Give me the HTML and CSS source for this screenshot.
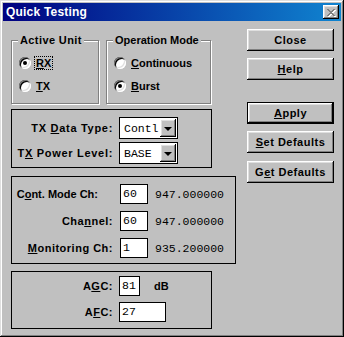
FILE: index.html
```html
<!DOCTYPE html>
<html lang="en">
<head>
  <meta charset="UTF-8">
  <title>Quick Testing</title>
  <link rel="stylesheet" href="styles.css">
</head>
<body>
  <div class="window">
    <div class="titlebar">
      <span class="title">Quick Testing</span>
      <span class="tb-close">
        <svg width="9" height="8" viewBox="0 0 9 8">
          <path fill="#fff" transform="translate(1,1)" d="M0 0h2v1H0zM6 0h2v1H6zM1 1h2v1H1zM5 1h2v1H5zM2 2h4v1H2zM3 3h2v1H3zM2 4h4v1H2zM1 5h2v1H1zM5 5h2v1H5zM0 6h2v1H0zM6 6h2v1H6z"/>
          <path fill="#808080" d="M0 0h2v1H0zM6 0h2v1H6zM1 1h2v1H1zM5 1h2v1H5zM2 2h4v1H2zM3 3h2v1H3zM2 4h4v1H2zM1 5h2v1H1zM5 5h2v1H5zM0 6h2v1H0zM6 6h2v1H6z"/>
        </svg>
      </span>
    </div>
    <div class="content">
      <div class="left">
        <div class="top-groups">
          <div class="group g-unit">
            <div class="group-title">Active Unit</div>
            <div class="radio-row"><span class="radio checked"></span><span class="focus"><u>R</u>X</span></div>
            <div class="radio-row"><span class="radio"></span><span class="rl"><u>T</u>X</span></div>
          </div>
          <div class="group g-mode">
            <div class="group-title">Operation Mode</div>
            <div class="radio-row"><span class="radio"></span><span class="rl"><u>C</u>ontinuous</span></div>
            <div class="radio-row"><span class="radio checked"></span><span class="rl"><u>B</u>urst</span></div>
          </div>
        </div>

        <div class="frame tx">
          <label class="lbl">TX <u>D</u>ata Type:</label>
          <div class="combo"><span class="combo-val">Contl</span><span class="combo-btn"><i class="arrow"></i></span></div>
          <label class="lbl">T<u>X</u> Power Level:</label>
          <div class="combo"><span class="combo-val">BASE</span><span class="combo-btn"><i class="arrow"></i></span></div>
        </div>

        <div class="frame chan">
          <label class="lbl short">C<u>o</u>nt. Mode Ch:</label>
          <span class="field w28">60</span>
          <span class="freq">947.000000</span>
          <label class="lbl">Cha<u>n</u>nel:</label>
          <span class="field w28">60</span>
          <span class="freq">947.000000</span>
          <label class="lbl"><u>M</u>onitoring Ch:</label>
          <span class="field w28">1</span>
          <span class="freq">935.200000</span>
        </div>

        <div class="frame agc">
          <label class="lbl">A<u>G</u>C:</label>
          <div class="agc-val"><span class="field w21">81</span><span class="db">dB</span></div>
          <label class="lbl">A<u>F</u>C:</label>
          <div><span class="field w47">27</span></div>
        </div>
      </div>

      <div class="right">
        <button class="btn">Close</button>
        <button class="btn"><u>H</u>elp</button>
        <button class="btn default spaced"><u>A</u>pply</button>
        <button class="btn"><u>S</u>et Defaults</button>
        <button class="btn last">G<u>e</u>t Defaults</button>
      </div>
    </div>
  </div>
</body>
</html>
```

FILE: styles.css
```css
*{margin:0;padding:0;box-sizing:border-box}
body{width:344px;height:337px;background:#c0c0c0;font-family:'Liberation Sans',Arial,sans-serif;font-size:11px;font-weight:bold;color:#000;overflow:hidden}
u{text-decoration:underline;text-underline-offset:1px}

.window{width:344px;height:337px;padding:3px;background:#c0c0c0;box-shadow:inset -1px -1px #000,inset 1px 1px #dfdfdf,inset -2px -2px #808080,inset 2px 2px #fff}
.titlebar{height:18px;display:flex;align-items:center;justify-content:space-between;padding:0 2px 0 3px;background:linear-gradient(to right,#000080,#1084d0);color:#fff}
.title{font-size:12px;font-weight:bold;letter-spacing:.2px}
.tb-close{width:16px;height:14px;background:#c0c0c0;display:flex;align-items:center;justify-content:center;padding:1px 0 0 1px;box-shadow:inset -1px -1px #000,inset 1px 1px #fff,inset -2px -2px #808080,inset 2px 2px #dfdfdf}
.tb-close svg{display:block}

.content{display:flex;padding-left:8px}
.left{width:225px;flex:none}
.right{width:87px;flex:none;margin-left:11px;padding-top:8px;display:flex;flex-direction:column}

/* group boxes */
.top-groups{display:flex;margin-top:19px}
.group{flex:none;height:64px;border:1px solid #808080;box-shadow:inset 1px 1px #fff,1px 1px #fff}
.g-unit{width:88px;margin-right:7px}
.g-mode{width:105px}
.group-title{display:block;width:fit-content;height:13px;line-height:13px;margin:-7px 0 0 6px;padding:0 2px;background:#c0c0c0}
.g-unit .group-title{letter-spacing:.4px}
.radio-row{display:flex;align-items:center;height:16px;margin:8px 0 0 7px}
.radio-row+.radio-row{margin-top:7px}
.radio{width:12px;height:12px;border-radius:50%;background:#fff;margin-right:4px;flex:none;position:relative;
  box-shadow:inset 1px 1px #808080,inset -1px -1px #fff,inset 2px 2px #000,inset -2px -2px #dfdfdf}
.radio.checked::after{content:"";position:absolute;left:4px;top:4px;width:4px;height:4px;border-radius:50%;background:#000}
.focus{outline:1px dotted #000;outline-offset:0;padding:0 1px}
.rl{padding:0 1px}

/* plain frames */
.frame{width:201px;border:1px solid #000;display:grid;grid-template-columns:101px auto;column-gap:6px;align-items:center;align-content:start}
.frame.tx{height:59px;margin-top:5px;padding-top:7px;row-gap:3px}
.frame.chan{width:225px;height:88px;margin-top:8px;padding-top:7px;row-gap:7px;grid-template-columns:101px 28px auto;column-gap:7px}
.frame.agc{height:58px;margin-top:7px;padding-top:4px;row-gap:6px}
.lbl{text-align:right;white-space:nowrap;letter-spacing:.5px}
.tx .lbl{letter-spacing:.7px}
.lbl.short{margin-right:15px;letter-spacing:0}

.combo{width:59px;height:22px;background:#fff;border:1px solid #000;display:flex;align-items:center;justify-content:space-between;padding:1px}
.combo-val{font:11.5px 'Liberation Mono',monospace;padding-left:3px}
.combo-btn{width:16px;height:18px;background:#c0c0c0;display:flex;align-items:center;justify-content:center;box-shadow:inset -1px -1px #000,inset 1px 1px #fff,inset -2px -2px #808080,inset 2px 2px #dfdfdf}
.arrow{width:0;height:0;border-left:4px solid transparent;border-right:4px solid transparent;border-top:4px solid #000;margin-top:1px}

.field{display:block;height:20px;background:#fff;border:1px solid #000;font:11.5px/18px 'Liberation Mono',monospace;padding-left:2px}
.w28{width:28px}
.w21{width:21px}
.w47{width:47px}
.freq{font:11.5px 'Liberation Mono',monospace}
.agc-val{display:flex;align-items:center}
.db{margin-left:14px}

/* buttons */
.btn{width:87px;height:22px;margin-bottom:7px;background:#c0c0c0;border:none;font:inherit;letter-spacing:.5px;color:#000;
  box-shadow:inset -1px -1px #000,inset 1px 1px #fff,inset -2px -2px #808080,inset 2px 2px #dfdfdf}
.btn.spaced{margin-top:15px}
.btn.last{margin-top:1px}
.btn.default{box-shadow:inset 0 0 0 1px #000,inset -2px -2px #000,inset 2px 2px #fff,inset -3px -3px #808080,inset 3px 3px #dfdfdf}
```
